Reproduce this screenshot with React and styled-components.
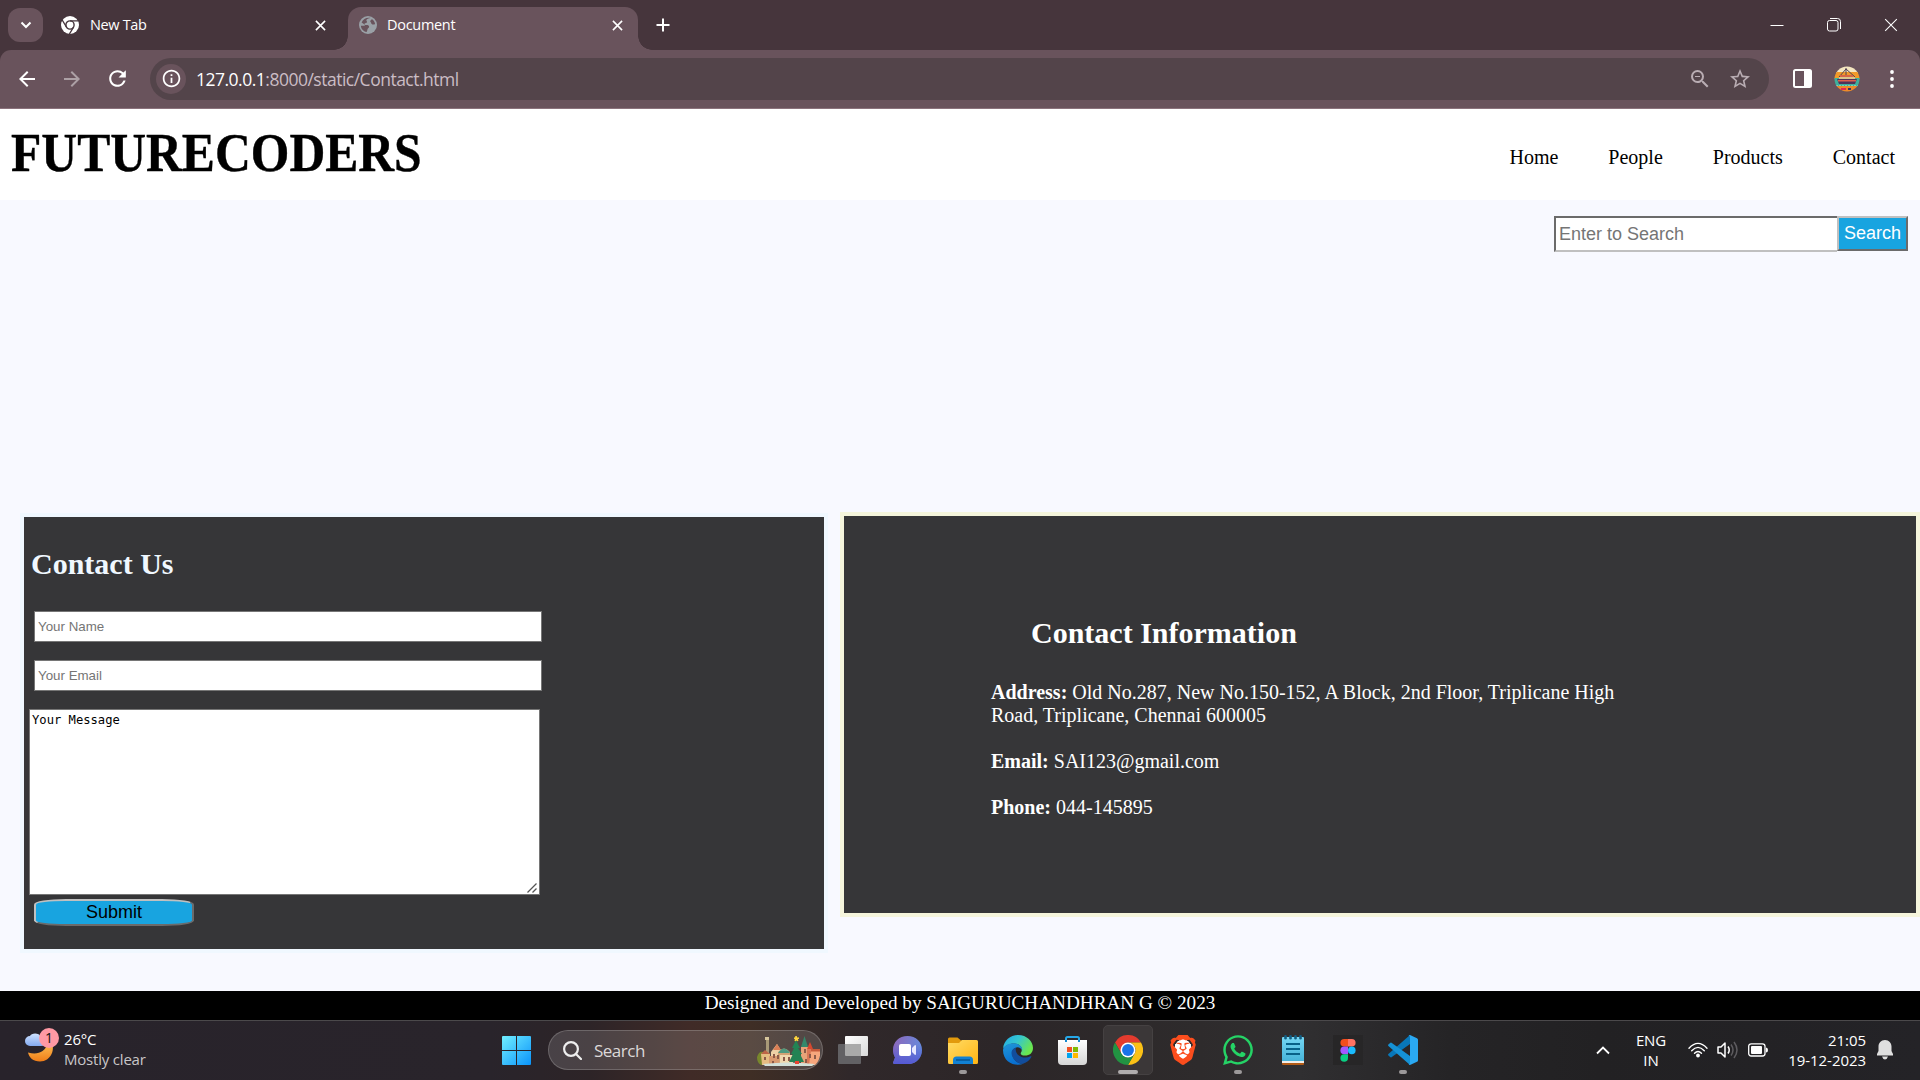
import React from "react";
import styled, { createGlobalStyle, css } from "styled-components";
import { SiBrave } from "react-icons/si";
import { FaWhatsapp } from "react-icons/fa";
import { MdArrowBack, MdArrowForward, MdRefresh, MdOutlineInfo, MdStarBorder, MdZoomOut } from "react-icons/md";

const ui = `"Open Sans", "Noto Sans", sans-serif`;
const serif = `"Liberation Serif", "Times New Roman", serif`;
const sans = `"Liberation Sans", Arial, sans-serif`;

const GlobalStyle = createGlobalStyle`
  * { box-sizing: border-box; }
  body { margin: 0; overflow: hidden; }
  svg { display: block; flex: none; }
  h1, h2, p { margin: 0; }
`;

const Screen = styled.div`
  width: 1920px;
  height: 1080px;
  display: flex;
  flex-direction: column;
  overflow: hidden;
`;

/* ---------- Browser chrome ---------- */

const TabStrip = styled.div`
  height: 50px;
  flex: none;
  display: flex;
  align-items: flex-start;
  padding-left: 8px;
  background: #46353c;
  font-family: ${ui};
`;

const TabMenu = styled.div`
  width: 35px;
  height: 34px;
  margin-top: 8px;
  border-radius: 12px;
  background: #69535c;
  display: flex;
  align-items: center;
  justify-content: center;
`;

const Tab = styled.div`
  position: relative;
  width: ${(p) => p.$width}px;
  height: 43px;
  margin-top: 7px;
  padding: 0 ${(p) => p.$right}px 7px ${(p) => p.$left}px;
  display: flex;
  align-items: center;
  ${(p) =>
    p.$active &&
    css`
      background: #69535c;
      border-radius: 13px 13px 0 0;
      &::before,
      &::after {
        content: "";
        position: absolute;
        bottom: 0;
        width: 14px;
        height: 14px;
      }
      &::before {
        left: -14px;
        background: radial-gradient(circle at 0 0, transparent 13.5px, #69535c 14px);
      }
      &::after {
        right: -14px;
        background: radial-gradient(circle at 100% 0, transparent 13.5px, #69535c 14px);
      }
    `}
`;

const TabTitle = styled.span`
  flex: 1;
  margin-left: ${(p) => p.$gap}px;
  font-size: 14.5px;
  line-height: 20px;
  letter-spacing: ${(p) => p.$track}px;
  color: #fff;
`;

const NewTab = styled.div`
  margin: 18px 0 0 18px;
`;

const WindowControls = styled.div`
  display: flex;
  align-items: center;
  gap: 43px;
  height: 50px;
  margin-left: auto;
  padding-right: 22px;
`;

const ToolbarBack = styled.div`
  background: #46353c;
  height: 59px;
  flex: none;
`;

const Toolbar = styled.div`
  height: 59px;
  display: flex;
  align-items: center;
  padding: 0 16px 1px 15px;
  background: #69535c;
  border-radius: 11px 11px 0 0;
  border-bottom: 1px solid #8b727c;
`;

const NavIcon = styled.div`
  width: 45px;
  opacity: ${(p) => (p.$dim ? 0.45 : 1)};
  color: #fff;
`;

const Omnibox = styled.div`
  width: 1619px;
  height: 42px;
  border-radius: 21px;
  background: #53444a;
  display: flex;
  align-items: center;
  padding: 0 17px 0 6px;
  color: #b9adb3;
`;

const SiteInfo = styled.div`
  width: 30px;
  height: 30px;
  border-radius: 50%;
  background: #69535c;
  color: #fff;
  display: flex;
  align-items: center;
  justify-content: center;
`;

const Url = styled.span`
  flex: 1;
  margin-left: 10px;
  padding-top: 1px;
  font-family: ${ui};
  font-size: 17.5px;
  line-height: 24px;
  letter-spacing: -0.5px;
  color: #cbbdc5;
  b {
    font-weight: 400;
    color: #fff;
  }
`;

const Star = styled.div`
  margin-left: 16px;
`;

const ToolbarEnd = styled.div`
  flex: 1;
  display: flex;
  align-items: center;
  padding-left: 24px;
`;

const AvatarBox = styled.div`
  margin: 0 30px 0 22px;
`;

/* ---------- Page ---------- */

const Page = styled.div`
  height: 911px;
  flex: none;
  display: flex;
  flex-direction: column;
  background: #f8f9ff;
  font-family: ${serif};
  font-size: 20px;
`;

const Header = styled.header`
  height: 91px;
  flex: none;
  background: #fff;
  display: flex;
  justify-content: space-between;
  padding: 0 25px 0 11px;
`;

const Logo = styled.h1`
  font-size: 55px;
  line-height: 64px;
  margin-top: 12px;
  font-weight: 700;
  white-space: nowrap;
  -webkit-text-stroke: 0.4px #000;
  transform: scaleX(0.902);
  transform-origin: 0 0;
`;

const Nav = styled.nav`
  display: flex;
  gap: 50px;
  line-height: 23px;
  padding-top: 37px;
`;

const SearchRow = styled.div`
  display: flex;
  justify-content: flex-end;
  align-items: flex-start;
  padding: 16px 12px 0 0;
  height: 312px;
  flex: none;
`;

const SearchInput = styled.input`
  width: 283px;
  height: 36px;
  padding: 1px 3px;
  border: 2px solid;
  border-color: #6b6b6b #c0c0c0 #c0c0c0 #6b6b6b;
  border-right: 0;
  border-radius: 0;
  background: #fff;
  font: 18px ${sans};
  &::placeholder { color: #757575; }
`;

const SearchButton = styled.button`
  width: 71px;
  height: 35px;
  padding: 0;
  border: 2px solid;
  border-color: #c0c0c0 #6b6b6b #6b6b6b #c0c0c0;
  border-radius: 0;
  background: #18a4e0;
  color: #fff;
  font: 18px ${sans};
`;

const Panels = styled.main`
  display: flex;
  align-items: flex-start;
  gap: 12px;
  flex: 1;
  padding-left: 20px;
`;

const FormPanel = styled.form`
  width: 808px;
  height: 440px;
  margin-top: 1px;
  border: 4px solid #f0f8ff;
  background: #363638;
  display: flex;
  flex-direction: column;
  align-items: flex-start;
`;

const FormTitle = styled.h2`
  margin: 30px 0 30px 7px;
  font-size: 30px;
  line-height: 34px;
  color: #f0f8ff;
`;

const Field = styled.input`
  width: 508px;
  height: 31px;
  margin: 0 0 18px 10px;
  padding: 1px 3px;
  border: 1px solid #767676;
  border-radius: 0;
  font: 13.33px ${sans};
  &::placeholder { color: #757575; }
`;

const MessageBox = styled.div`
  position: relative;
  width: 511px;
  height: 186px;
  margin-left: 5px;
`;

const Message = styled.textarea`
  display: block;
  width: 100%;
  height: 100%;
  padding: 3px 2px;
  border: 1px solid #767676;
  border-radius: 0;
  resize: none;
  font: 12.17px/15px "DejaVu Sans Mono", monospace;
  color: #000;
`;

const Grip = styled.svg`
  position: absolute;
  right: 3px;
  bottom: 2px;
`;

const Submit = styled.button`
  width: 160px;
  height: 27px;
  margin: 4px 0 0 10px;
  padding: 0 0 1px;
  border: 2px solid;
  border-color: #c0c0c0 #6b6b6b #6b6b6b #c0c0c0;
  border-radius: 20%;
  background: #18a4e0;
  color: #000;
  font: 18px ${sans};
`;

const InfoPanel = styled.section`
  width: 1080px;
  height: 405px;
  border: 4px solid #f5f5dc;
  background: #363638;
  color: #fff;
  padding: 100px 250px 0 147px;
`;

const InfoTitle = styled.h2`
  margin: 0 0 31px 40px;
  font-size: 30px;
  line-height: 34px;
`;

const InfoLine = styled.p`
  width: 650px;
  line-height: 23px;
  margin-bottom: 23px;
`;

const Footer = styled.footer`
  height: 29px;
  flex: none;
  background: #000;
  color: #fff;
  text-align: center;
  font-size: 19.2px;
  line-height: 23px;
`;

/* ---------- Taskbar ---------- */

const Taskbar = styled.div`
  height: 60px;
  flex: none;
  display: flex;
  border-top: 1px solid #4b494b;
  background: linear-gradient(90deg, #28232b 0, #29242b 490px, #2d2427 590px, #402b27 690px, #3f2e25 750px, #30282a 850px, #2c2628 1000px, #2e2b2c 1200px, #302f31 1300px, #252426 1450px, #222123 1600px, #242327 1920px);
  font-family: ${ui};
  font-size: 15px;
  color: #fff;
`;

const Weather = styled.div`
  width: 489px;
  display: flex;
  padding: 6px 0 0 24px;
`;

const WeatherIcon = styled.div`
  position: relative;
  width: 40px;
`;

const Badge = styled.span`
  position: absolute;
  left: 15px;
  top: 1px;
  width: 20px;
  height: 20px;
  border-radius: 50%;
  background: #ff99a4;
  color: #111;
  font-size: 14px;
  line-height: 20px;
  text-align: center;
`;

const Stack = styled.div`
  line-height: 20px;
  white-space: nowrap;
  text-align: ${(p) => p.$align || "left"};
  letter-spacing: ${(p) => p.$track || 0}px;
  padding-top: ${(p) => p.$top || 0}px;
  width: ${(p) => (p.$width ? p.$width + "px" : "auto")};
`;

const Muted = styled.div`
  color: #c8c6c8;
`;

const Slot = styled.div`
  width: 55px;
  height: 58px;
  display: flex;
  align-items: center;
  justify-content: center;
  position: relative;
`;

const ActiveTile = styled.div`
  width: 50px;
  height: 50px;
  border-radius: 5px;
  background: #3b3738;
  border: 1px solid #454142;
  display: flex;
  align-items: center;
  justify-content: center;
`;

const Running = styled.i`
  position: absolute;
  bottom: 5px;
  left: 50%;
  width: ${(p) => p.$width}px;
  height: 4px;
  margin-left: ${(p) => -p.$width / 2}px;
  border-radius: 2px;
  background: ${(p) => (p.$width > 10 ? "#b0adae" : "#9c999a")};
`;

const SearchPill = styled.div`
  width: 275px;
  height: 40px;
  margin: 9px 2px 0 4px;
  border-radius: 20px;
  border: 1px solid rgba(255, 255, 255, 0.19);
  background: rgba(255, 255, 255, 0.14);
  display: flex;
  align-items: center;
  padding: 1px 2px 0 14px;
  font-size: 17px;
  letter-spacing: -0.5px;
  color: #dcd8d8;
`;

const PillText = styled.span`
  flex: 1;
  margin-left: 12px;
  line-height: 24px;
`;

const Tray = styled.div`
  flex: 1;
  display: flex;
  align-items: center;
  justify-content: flex-end;
  padding: 0 27px 2px 0;
`;

const TrayGap = styled.div`
  width: ${(p) => p.$w}px;
`;

function Chevron({ up, size = 14, w = 2 }) {
  return (
    <svg width={size} height={size} viewBox="0 0 14 14" fill="none" stroke="#fff" strokeWidth={w}>
      <path d={up ? "M1 10.5 7 4.5l6 6" : "M2.5 4.5 7 9l4.5-4.5"} />
    </svg>
  );
}

function Cross({ size, w }) {
  return (
    <svg width={size} height={size} viewBox="0 0 12 12" fill="none" stroke="#fff" strokeWidth={w}>
      <path d="M1 1l10 10M11 1 1 11" />
    </svg>
  );
}

function ChromeMono() {
  return (
    <svg width="18" height="18" viewBox="0 0 18 18">
      <circle cx="9" cy="9" r="9" fill="#fff" />
      <g fill="none" stroke="#46353c" strokeWidth="1.4">
        <circle cx="9" cy="9" r="4.1" />
        <path d="M9 4.9h8.2M5.4 11 1.2 4M12.6 11 8.4 18" />
      </g>
    </svg>
  );
}

function Globe() {
  return (
    <svg width="18" height="18" viewBox="0 0 18 18">
      <circle cx="9" cy="9" r="9" fill="#9aa0a6" />
      <path d="M11.500 2C9.500 2.300 7.800 2.800 7.400 4c-.2 1 .9 1.300.6 2.200-.3.900-1.700.6-2.300 1.400-.6.900.3 1.600 1.500 1.500 1.700-.1 2.900.3 2.900 1.700 0 1.200-1.200 1.300-1.600 2.400-.3.900-.3 1.900-.9 2.800C4.300 15.500 2.100 12.900 1.900 9.800h3.300c.8 0 .9-.8.3-1.300L2.600 6.500C4 3.300 7.500 1.200 11.500 2zM13 3.200c1.600 1 2.800 2.700 3.100 4.700-1.200.9-2.500.9-3.400.1-.8-.8-.2-1.500-1.200-2.100-.9-.7.5-2.100 1.500-2.700z" fill="#69535c" />
    </svg>
  );
}

function Avatar() {
  return (
    <svg width="26" height="26" viewBox="0 0 26 26">
      <clipPath id="av"><circle cx="13" cy="13" r="12.500" /></clipPath>
      <g clipPath="url(#av)">
        <path fill="#f4e6c0" d="M0 0h26v7H0z" />
        <path fill="#f19a29" d="M0 6h26v7H0z" />
        <path fill="#3fb09b" d="M0 12h26v9H0z" />
        <path fill="#ee8a2a" d="M0 20h26v6H0z" />
        <path d="M12 2v7M12 3 5 11M12 3l9 8" stroke="#514055" strokeWidth="1" fill="none" />
        <path fill="#d76545" d="M6 9h13v2H6z" />
        <path fill="#d9c58b" d="M5 11h16v2H5z" />
        <path fill="#513259" d="M3 13h20l-2 5H5z" />
        <path fill="#df604d" d="M4 14h18v1.500H4z" />
        <path d="M2 19.500h22" stroke="#76d0bd" strokeDasharray="2 1" />
        <path fill="#df2855" d="M7 22h5v2H7z" /><path fill="#3c325d" d="M14 22h3v2h-3z" />
      </g>
    </svg>
  );
}

function City() {
  return (
    <svg width="63" height="31" viewBox="0 0 63 31">
      <path d="M4 30Q0 28 0 22q2-6 6-5l1 13z" fill="#78872c" />
      <path d="M9 4h3v15H9z" fill="#a99a78" /><path d="M8 2h4v3H8z" fill="#d5c59b" />
      <path d="M4 19l4-3 5 3v11H5z" fill="#e5bd82" /><path d="M4 19l4-4 5 4z" fill="#bd6547" />
      <path d="M14 17l6-8 5 8v13H14z" fill="#edd1a6" /><path d="M16 15l4-6 4 6z" fill="#d97e55" />
      <path d="M21 17q6-7 12 0v13H21z" fill="#d3a475" /><path d="M21 18q6-9 12 0z" fill="#4d9a80" />
      <path d="M12 21h10v9H12z" fill="#d89a70" /><path d="M23 20h13v10H23z" fill="#f0d8ae" />
      <path d="M44 12h7v18h-7z" fill="#e8a379" /><path d="M44 12l3.500-11L51 12z" fill="#33886b" />
      <path d="M50 14h6v16h-6z" fill="#da7756" /><path d="M50 14l3-7 3 7z" fill="#d7482f" />
      <path d="M54 16h9q1 8-5 14h-6z" fill="#f6a67c" /><path d="M54 14h9v2.500h-9z" fill="#c65a3a" />
      <path d="M39 5l4 8h-2l4 6h-2l4 8H32l4-8h-2l3-6h-2z" fill="#238354" />
      <path d="M37 3l5 0-4 3 1-5 2 5z" fill="#ffd63d" stroke="#ffd63d" />
      <g fill="#8b5a48"><path d="M7 22h2v3H7zM16 19h2v4h-2zM20 20h2v4h-2zM26 22h2v4h-2zM31 22h2v4h-2zM47 14h2v4h-2zM52 19h2v4h-2zM57 20h2v4h-2zM15 26h2v4h-2zM48 24h2v4h-2z" /></g>
      <path d="M6 29q25-3 52 0l-3 2H8z" fill="#d3e1d9" />
      <path d="M38 26h4v3h-4z" fill="#e94432" />
    </svg>
  );
}

function WindowsLogo() {
  return (
    <svg width="29" height="29" viewBox="0 0 29 29">
      <defs><linearGradient id="win" x1="0" y1="0" x2="1" y2="1"><stop stopColor="#71efff" /><stop offset="1" stopColor="#0a93fa" /></linearGradient></defs>
      <path fill="url(#win)" d="M1 0h13v14H0V1q0-1 1-1zM15 0h13q1 0 1 1v13H15zM0 15h14v14H1q-1 0-1-1zM15 15h14v13q0 1-1 1H15z" />
    </svg>
  );
}

function TaskView() {
  return (
    <svg width="30" height="28" viewBox="0 0 30 28">
      <defs><linearGradient id="tv" x2="1" y2="1"><stop stopColor="#fff" /><stop offset="1" stopColor="#d9d9d9" /></linearGradient></defs>
      <rect x="7" width="23" height="20" rx="1" fill="url(#tv)" />
      <rect y="8" width="23" height="20" rx="1" fill="#626164" />
      <path d="M7 8h16v12H8q-1 0-1-1z" fill="#a9a9a9" />
    </svg>
  );
}

function Chat() {
  return (
    <svg width="29" height="28" viewBox="0 0 29 28">
      <defs><linearGradient id="chat" x2="1" y2=".3"><stop stopColor="#8f65b9" /><stop offset="1" stopColor="#668bdc" /></linearGradient><linearGradient id="chat2" x2="0" y2="1"><stop offset=".3" stopColor="#5158d0" stopOpacity="0" /><stop offset="1" stopColor="#5559d4" /></linearGradient></defs>
      {["url(#chat)", "url(#chat2)"].map((f) => (
        <path key={f} fill={f} d="M14.500 0C23 0 29 6 29 14s-6 14-14 14H1.500c-1.200 0-1.800-1-1.200-2l1.700-4.500C.7 19 0 16.500 0 14 0 6 6 0 14.500 0z" />
      ))}
      <rect x="6" y="8" width="12" height="12" rx="2" fill="#fff" /><path d="M19 12l3-3q1 0 1 1v8q0 1-1 1l-3-3z" fill="#e7e8ff" />
    </svg>
  );
}

function Folder() {
  return (
    <svg width="30" height="27" viewBox="0 0 30 27">
      <defs><linearGradient id="fo" x2="1" y2="1"><stop stopColor="#ffdb65" /><stop offset="1" stopColor="#ffb514" /></linearGradient></defs>
      <path d="M0 2q0-1.500 1.500-1.500h8L13 3.500h15V10H0z" fill="#e29a0d" />
      <path d="M0 6h11l3-3h14.500Q30 3 30 4.500V25.500Q30 27 28.500 27h-27Q0 27 0 25.500z" fill="url(#fo)" />
      <path d="M5 27v-4q0-3.500 3.500-3.500h13q3.500 0 3.500 3.500v4z" fill="#1281d3" /><path d="M8 23h14" stroke="#064f88" strokeWidth="1.300" />
    </svg>
  );
}

function Edge() {
  return (
    <svg width="30" height="30" viewBox="0 0 30 30">
      <defs>
        <linearGradient id="ed1" x2="1" y2=".5"><stop stopColor="#20a8e8" /><stop offset=".5" stopColor="#35c6cf" /><stop offset="1" stopColor="#6ae64e" /></linearGradient>
        <linearGradient id="ed2" x2=".3" y2="1"><stop stopColor="#2097d8" /><stop offset="1" stopColor="#096fd0" /></linearGradient>
      </defs>
      <path d="M0 13.500C1 5.500 7 0 15 0c9 0 15 6.500 15 13 0 5-3.500 7.500-8 7.500-3.500 0-5-1.400-4-3 2.500-4-1-9-7-9C6 8.500 2 11 0 13.500z" fill="url(#ed1)" />
      <path d="M0 15C.5 11 5 8.200 10 8.200c6 0 9.600 3.400 9.200 7.300-.7-1.900-3.200-3.600-5.700-3.100C9 13.300 8 18 10 22c2 4.600 7 7.500 10.500 6.700C13 32 0 28 0 15z" fill="url(#ed2)" />
      <path d="M13 12.400C8 14 7.500 18.500 9.800 22.500 12.500 27 17 29 20 28.800c4-1.300 7-4 8.300-6.700.4-.9-.2-1.200-.9-.8-5.500 3-12.400.4-14.100-4-.8-2-.7-3.500-.3-4.900z" fill="#124d9c" />
    </svg>
  );
}

function Store() {
  return (
    <svg width="29" height="29" viewBox="0 0 29 29">
      <defs><linearGradient id="st" x2="0" y2="1"><stop stopColor="#fff" /><stop offset="1" stopColor="#d6d6d6" /></linearGradient></defs>
      <path d="M8 8V2.500Q8 1 9.500 1h10Q21 1 21 2.500V8" fill="none" stroke="#26a8e8" strokeWidth="2" />
      <path d="M0 4h29v21q0 4-4 4H4q-4 0-4-4z" fill="url(#st)" /><path d="M8 4v2M21 4v2" stroke="#168bd1" strokeWidth="2" />
      <path fill="#f25022" d="M9 11h5v5H9z" /><path fill="#7fba00" d="M15 11h5v5h-5z" /><path fill="#00a4ef" d="M9 17h5v5H9z" /><path fill="#ffb900" d="M15 17h5v5h-5z" />
    </svg>
  );
}

function ChromeLogo() {
  return (
    <svg width="30" height="30" viewBox="0 0 48 48">
      <path fill="#e33b2e" d="M3.200 12A24 24 0 0 1 44.800 12H24A12 12 0 0 0 13.600 18z" />
      <path fill="#e33b2e" d="M3.200 12 13.600 30 13.600 18 24 12z" />
      <path fill="#fbc116" d="M44.800 12A24 24 0 0 1 24 48L34.400 30A12 12 0 0 0 24 12z" />
      <path fill="#229342" d="M3.200 12A24 24 0 0 0 24 48L34.400 30A12 12 0 0 1 13.600 30z" />
      <circle cx="24" cy="24" r="12" fill="#fff" /><circle cx="24" cy="24" r="9.500" fill="#1a73e8" />
    </svg>
  );
}

const BraveMark = styled.div`
  width: 26px;
  height: 30px;
  display: flex;
  align-items: center;
  justify-content: center;
  color: #fb4d1d;
  background: radial-gradient(ellipse 9px 11px at 50% 50%, #fff 97%, transparent);
`;

function Notepad() {
  return (
    <svg width="22" height="30" viewBox="0 0 22 30">
      <defs><linearGradient id="np" x2="0" y2="1"><stop stopColor="#74d6f3" /><stop offset="1" stopColor="#47b4d9" /></linearGradient></defs>
      <path d="M0 24h22v5q0 1-1 1H1q-1 0-1-1z" fill="#b25b16" /><path d="M0 24h22v4H0z" fill="#f1eee9" />
      <path d="M0 3q0-1 1-1h20q1 0 1 1v23H0z" fill="url(#np)" />
      <g fill="#125e83">{[3.5, 8.5, 13.5, 18.5].map((x) => <rect key={x} x={x - 1.3} width="2.600" height="4.500" rx="1.300" />)}</g>
      <path d="M4 9h14M4 14h14M4 19h14" stroke="#086188" strokeWidth="1.800" />
    </svg>
  );
}

function Figma() {
  return (
    <svg width="30" height="30" viewBox="0 0 30 30">
      <path fill="#272627" d="M0 0h30v30H0z" />
      <path fill="#f24e1e" d="M15 4h-3.800a3.800 3.800 0 0 0 0 7.600H15z" /><path fill="#ff7262" d="M15 4h3.800a3.800 3.800 0 0 1 0 7.600H15z" />
      <path fill="#a259ff" d="M15 11.600h-3.800a3.800 3.800 0 0 0 0 7.600H15z" /><circle cx="18.800" cy="15.400" r="3.800" fill="#1abcfe" />
      <path fill="#0acf83" d="M15 19.200h-3.800a3.800 3.800 0 1 0 3.800 3.800z" />
    </svg>
  );
}

function VsCode() {
  return (
    <svg width="30" height="30" viewBox="0 0 30 30">
      <path fill="#0877b9" d="M22 0v9L3.500 22.200q-.7.500-1.400-.1L.4 20.500q-.7-.7 0-1.400z" />
      <path fill="#1592d6" d="M22 30v-9L3.500 7.800q-.7-.5-1.400.1L.4 9.500q-.7.700 0 1.400z" />
      <path fill="#2aa9f3" d="M22 0l7 3.300q1 .5 1 1.500v20.400q0 1-1 1.500L22 30q-1 .3-1.800-.5Q22 30.500 22 27V3q0-3.500-1.800-2.500Q21-.3 22 0z" />
    </svg>
  );
}

function Moon() {
  return (
    <svg width="36" height="36" viewBox="0 0 36 36">
      <defs><linearGradient id="mo" x2="0" y2="1"><stop stopColor="#ffc65a" /><stop offset="1" stopColor="#ef7d18" /></linearGradient><linearGradient id="cl" x2="0" y2="1"><stop stopColor="#cfe2ff" /><stop offset="1" stopColor="#83aaf0" /></linearGradient></defs>
      <path d="M27 14c5 8 0 20.500-11 20.500-7 0-11-4-12-9 10 3 17-1 19-8z" fill="url(#mo)" />
      <path d="M6 19a5 5 0 0 1 0-10c1-3 9-4 11 1 6 1 6 9 0 9z" fill="url(#cl)" />
    </svg>
  );
}

function Wifi() {
  return (
    <svg width="20" height="16" viewBox="0 0 20 16" fill="none" stroke="#fff" strokeWidth="1.400" strokeLinecap="round">
      <path d="M1 6.200Q10-3.500 19 6.200M3.700 8.700q6.300-6.600 12.600 0M6.500 11.200q3.500-3.500 7 0" /><circle cx="10" cy="13.500" r="1.200" fill="#fff" />
    </svg>
  );
}

function Speaker() {
  return (
    <svg width="21" height="18" viewBox="0 0 21 18" fill="none" stroke="#fff" strokeWidth="1.500">
      <path d="M1 6h3l4-4v14l-4-4H1z" strokeLinejoin="round" /><path d="M11 5.500q2.500 3.500 0 7" /><path d="M14 3.500q4 5.500 0 11M17 1q6 8 0 16" stroke="#5e5c60" />
    </svg>
  );
}

function Battery() {
  return (
    <svg width="20" height="14" viewBox="0 0 20 14">
      <rect x=".7" y=".8" width="16.300" height="12.200" rx="2.500" fill="none" stroke="#fff" strokeWidth="1.300" /><rect x="3" y="3" width="11" height="8" rx="1" fill="#fff" /><path d="M18 4.500q2 0 2 2.500t-2 2.500z" fill="#fff" />
    </svg>
  );
}

export default function App() {
  return (
    <Screen>
      <GlobalStyle />
      <TabStrip>
        <TabMenu><Chevron w={2} /></TabMenu>
        <Tab $width={305} $left={18} $right={22}>
          <ChromeMono />
          <TabTitle $gap={11} $track={-0.35}>New Tab</TabTitle>
          <Cross size={11} w={1.7} />
        </Tab>
        <Tab $width={290} $left={11} $right={15} $active>
          <Globe />
          <TabTitle $gap={10} $track={-0.3}>Document</TabTitle>
          <Cross size={11} w={1.7} />
        </Tab>
        <NewTab>
          <svg width="14" height="14" viewBox="0 0 14 14" stroke="#fff" strokeWidth="2"><path d="M7 .5v13M.5 7h13" /></svg>
        </NewTab>
        <WindowControls>
          <svg width="14" height="14" stroke="#fff"><path d="M.5 7.500h13" /></svg>
          <svg width="14" height="14" fill="none" stroke="#fff"><rect x=".5" y="2.500" width="10.500" height="10.500" rx="2" /><path d="M3 .5h7.500q3 0 3 3V11" /></svg>
          <Cross size={14} w={0.9} />
        </WindowControls>
      </TabStrip>
      <ToolbarBack>
        <Toolbar>
          <NavIcon><MdArrowBack size={24} /></NavIcon>
          <NavIcon $dim><MdArrowForward size={24} /></NavIcon>
          <NavIcon><MdRefresh size={25} /></NavIcon>
          <Omnibox>
            <SiteInfo><MdOutlineInfo size={21} /></SiteInfo>
            <Url><b>127.0.0.1</b>:8000/static/Contact.html</Url>
            <MdZoomOut size={24} />
            <Star><MdStarBorder size={24} /></Star>
          </Omnibox>
          <ToolbarEnd>
            <svg width="19" height="19" viewBox="0 0 19 19"><rect x="1" y="1" width="17" height="17" rx="1.500" fill="none" stroke="#fff" strokeWidth="2" /><path d="M11 1h7v17h-7z" fill="#fff" /></svg>
            <AvatarBox><Avatar /></AvatarBox>
            <svg width="4" height="18" viewBox="0 0 4 18" fill="#fff"><circle cx="2" cy="2" r="1.900" /><circle cx="2" cy="9" r="1.900" /><circle cx="2" cy="16" r="1.900" /></svg>
          </ToolbarEnd>
        </Toolbar>
      </ToolbarBack>

      <Page>
        <Header>
          <Logo>FUTURECODERS</Logo>
          <Nav>
            <span>Home</span><span>People</span><span>Products</span><span>Contact</span>
          </Nav>
        </Header>
        <SearchRow>
          <SearchInput placeholder="Enter to Search" />
          <SearchButton>Search</SearchButton>
        </SearchRow>
        <Panels>
          <FormPanel>
            <FormTitle>Contact Us</FormTitle>
            <Field placeholder="Your Name" />
            <Field placeholder="Your Email" />
            <MessageBox>
              <Message defaultValue="Your Message" spellCheck={false} />
              <Grip width="10" height="10" viewBox="0 0 10 10" stroke="#555" strokeWidth="1.300"><path d="M.5 9.500l9-9M5.500 9.500l4-4" /></Grip>
            </MessageBox>
            <Submit type="button">Submit</Submit>
          </FormPanel>
          <InfoPanel>
            <InfoTitle>Contact Information</InfoTitle>
            <InfoLine><b>Address:</b> Old No.287, New No.150-152, A Block, 2nd Floor, Triplicane High Road, Triplicane, Chennai 600005</InfoLine>
            <InfoLine><b>Email:</b> SAI123@gmail.com</InfoLine>
            <InfoLine><b>Phone:</b> 044-145895</InfoLine>
          </InfoPanel>
        </Panels>
        <Footer>Designed and Developed by SAIGURUCHANDHRAN G © 2023</Footer>
      </Page>

      <Taskbar>
        <Weather>
          <WeatherIcon><Moon /><Badge>1</Badge></WeatherIcon>
          <Stack $top={2} $track={-0.2}>26°C<Muted>Mostly clear</Muted></Stack>
        </Weather>
        <Slot><WindowsLogo /></Slot>
        <SearchPill>
          <svg width="19" height="19" viewBox="0 0 19 19" fill="none" stroke="#eee" strokeWidth="2.200" strokeLinecap="round"><circle cx="8" cy="8" r="6.900" /><path d="M13 13l5 5" /></svg>
          <PillText>Search</PillText>
          <City />
        </SearchPill>
        <Slot><TaskView /></Slot>
        <Slot><Chat /></Slot>
        <Slot><Folder /><Running $width={8} /></Slot>
        <Slot><Edge /></Slot>
        <Slot><Store /></Slot>
        <Slot><ActiveTile><ChromeLogo /></ActiveTile><Running $width={20} /></Slot>
        <Slot><BraveMark><SiBrave size={30} /></BraveMark></Slot>
        <Slot><FaWhatsapp size={34} color="#25d366" /><Running $width={8} /></Slot>
        <Slot><Notepad /></Slot>
        <Slot><Figma /></Slot>
        <Slot><VsCode /><Running $width={8} /></Slot>
        <Tray>
          <Chevron up size={14} w={1.8} />
          <TrayGap $w={21} />
          <Stack $align="center" $track={-0.1} $width={40}>ENG<br />IN</Stack>
          <TrayGap $w={17} />
          <Wifi />
          <TrayGap $w={9} />
          <Speaker />
          <TrayGap $w={10} />
          <Battery />
          <Stack $align="right" $track={-0.05} $width={98}>21:05<br />19-12-2023</Stack>
          <TrayGap $w={11} />
          <svg width="16" height="20" viewBox="0 0 16 20" fill="#dfdfdf"><path d="M8 0c4 0 6.500 3 6.500 6.500V11L16 14v1.500H0V14l1.500-3V6.500C1.500 3 4 0 8 0zM5 16.500h6Q10 19.500 8 19.500T5 16.500z" /></svg>
        </Tray>
      </Taskbar>
    </Screen>
  );
}
